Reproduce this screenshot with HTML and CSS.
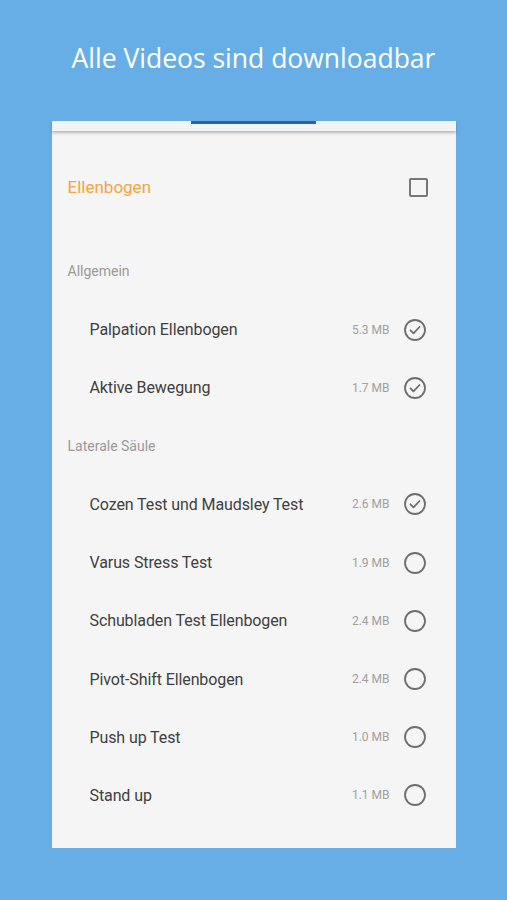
FILE: index.html
```html
<!DOCTYPE html>
<html lang="de">
<head>
  <meta charset="UTF-8">
  <meta name="viewport" content="width=device-width, initial-scale=1.0">
  <title>Videos</title>
  <link rel="stylesheet" href="styles.css">
</head>
<body>

<div class="title">Alle Videos sind downloadbar</div>

<div class="card">
  <div class="tabs"><div class="tab-indicator"></div></div>

  <div class="list">
    <div class="header-row">
      <span class="topic">Ellenbogen</span>
      <span class="checkbox"></span>
    </div>

    <div class="section">Allgemein</div>
    <div class="item"><span class="name">Palpation Ellenbogen</span><span class="size">5.3 MB</span><svg class="icon" viewBox="0 0 24 24"><circle cx="12" cy="12" r="10"/><path d="M7.5 12.3l3 3 6-6.3"/></svg></div>
    <div class="item"><span class="name">Aktive Bewegung</span><span class="size">1.7 MB</span><svg class="icon" viewBox="0 0 24 24"><circle cx="12" cy="12" r="10"/><path d="M7.5 12.3l3 3 6-6.3"/></svg></div>

    <div class="section">Laterale Säule</div>
    <div class="item"><span class="name">Cozen Test und Maudsley Test</span><span class="size">2.6 MB</span><svg class="icon" viewBox="0 0 24 24"><circle cx="12" cy="12" r="10"/><path d="M7.5 12.3l3 3 6-6.3"/></svg></div>
    <div class="item"><span class="name">Varus Stress Test</span><span class="size">1.9 MB</span><svg class="icon" viewBox="0 0 24 24"><circle cx="12" cy="12" r="10"/></svg></div>
    <div class="item"><span class="name">Schubladen Test Ellenbogen</span><span class="size">2.4 MB</span><svg class="icon" viewBox="0 0 24 24"><circle cx="12" cy="12" r="10"/></svg></div>
    <div class="item"><span class="name">Pivot-Shift Ellenbogen</span><span class="size">2.4 MB</span><svg class="icon" viewBox="0 0 24 24"><circle cx="12" cy="12" r="10"/></svg></div>
    <div class="item"><span class="name">Push up Test</span><span class="size">1.0 MB</span><svg class="icon" viewBox="0 0 24 24"><circle cx="12" cy="12" r="10"/></svg></div>
    <div class="item"><span class="name">Stand up</span><span class="size">1.1 MB</span><svg class="icon" viewBox="0 0 24 24"><circle cx="12" cy="12" r="10"/></svg></div>
  </div>
</div>

</body>
</html>
```

FILE: styles.css
```css
body {
  margin: 0;
  padding: 0;
  background-color: #68aee6;
  font-family: Roboto, "Liberation Sans", sans-serif;
}
.title {
  height: 121px;
  box-sizing: border-box;
  padding-top: 39px;
  text-align: center;
  color: #fff;
  font-family: "Open Sans", sans-serif;
  font-size: 26.5px;
  line-height: 38px;
}
.card {
  width: 404px;
  height: 727px;
  margin: 0 auto;
  background-color: #f5f5f5;
}
.tabs {
  height: 10px;
  background-color: #f2f4f5;
  box-shadow: 0 2px 3px rgba(0, 0, 0, 0.25);
}
.tab-indicator {
  margin-left: 139px;
  width: 125px;
  height: 3px;
  background-color: #2c5fae;
}
.list {
  padding: 27px 29px 0 16px;
}
.header-row {
  height: 58px;
  margin-bottom: 26px;
  display: flex;
  align-items: center;
  justify-content: space-between;
}
.topic {
  color: #f5a33e;
  font-size: 17px;
}
.checkbox {
  width: 15px;
  height: 15px;
  border: 2px solid #777;
  border-radius: 2px;
  margin-right: -1px;
}
.section {
  height: 58.5px;
  line-height: 58.5px;
  color: #9a9a9a;
  font-size: 14px;
}
.item {
  height: 58.2px;
  display: flex;
  align-items: center;
  padding-left: 22px;
}
.name {
  flex: 1;
  color: #404040;
  font-size: 16px;
  letter-spacing: -0.1px;
}
.size {
  color: #a0a0a0;
  font-size: 12px;
  margin-right: 13px;
}
.icon {
  width: 24px;
  height: 24px;
  fill: none;
  stroke: #6e6e6e;
  stroke-width: 1.8;
  stroke-linecap: round;
  stroke-linejoin: round;
}
```
